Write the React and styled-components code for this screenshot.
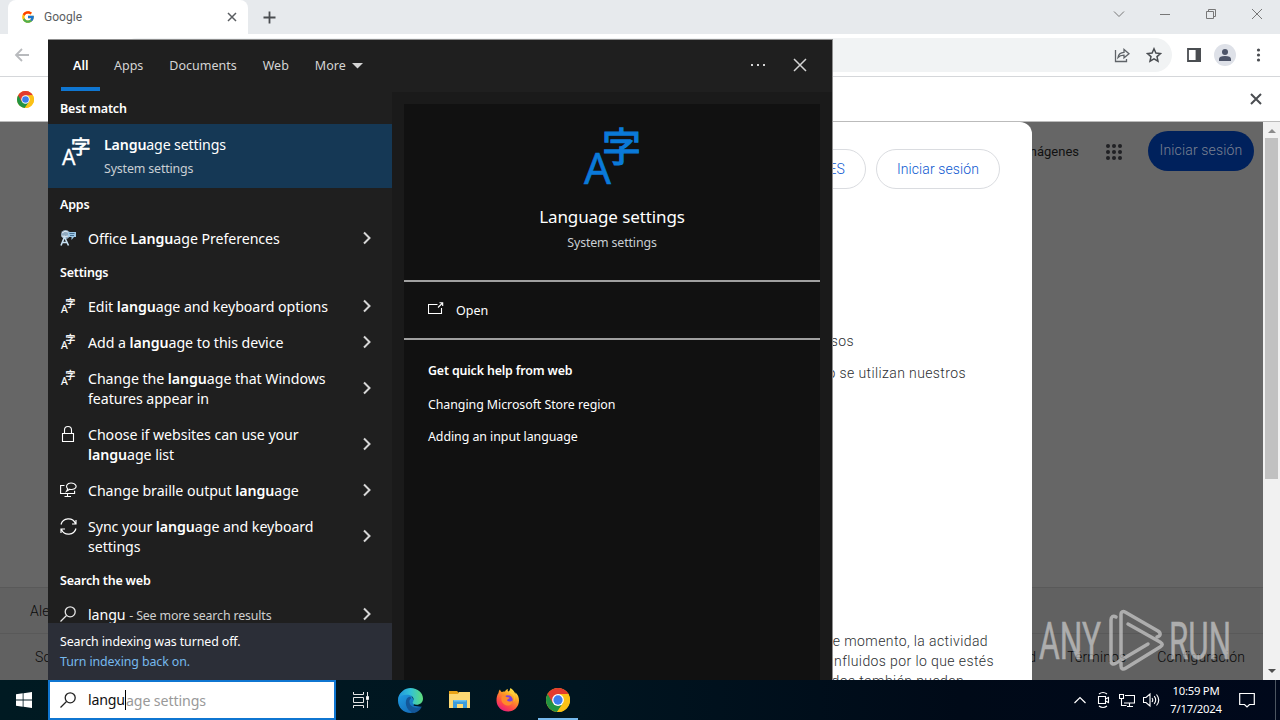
import React from 'react';
import styled, { createGlobalStyle } from 'styled-components';
import { FcGoogle } from 'react-icons/fc';

const GlobalStyle = createGlobalStyle`
  * { box-sizing: border-box; }
  body { margin: 0; overflow: hidden; background: #000; }
  svg { display: block; flex: none; }
`;

const ui = '"Noto Sans", "Open Sans", sans-serif';
const web = 'Roboto, "Liberation Sans", sans-serif';

const Desktop = styled.div`
  position: relative;
  display: flex;
  flex-direction: column;
  width: 1280px;
  height: 720px;
  overflow: hidden;
  font-family: ${ui};
`;

/* ---------- browser ---------- */

const Browser = styled.div`
  display: flex;
  flex-direction: column;
  height: 680px;
  background: #fff;
  font-family: ${web};
`;

const TabStrip = styled.div`
  display: flex;
  align-items: center;
  height: 34px;
  padding-left: 8px;
  background: #e7eaed;
`;

const Tab = styled.div`
  display: flex;
  align-items: center;
  width: 240px;
  height: 34px;
  padding: 0 11px 0 13px;
  border-radius: 8px 8px 0 0;
  background: #fff;
  color: #5a5d61;
  font-size: 12px;
  letter-spacing: 0.05px;
`;

const TabTitle = styled.span`
  flex: 1;
  margin-left: 9px;
`;

const NewTab = styled.div`
  flex: 1;
  padding-left: 15px;
`;

const WindowButtons = styled.div`
  display: flex;
  align-items: center;
  gap: 34px;
  height: 28px;
  align-self: flex-start;
  padding-right: 17px;
`;

const Toolbar = styled.div`
  display: flex;
  align-items: center;
  height: 43px;
  padding: 0 14px;
  border-bottom: 1px solid #d5d7da;
`;

const AddressBar = styled.div`
  display: flex;
  align-items: center;
  justify-content: flex-end;
  flex: 1;
  gap: 16px;
  height: 34px;
  margin: 0 14px 0 90px;
  padding-right: 10px;
  border-radius: 17px;
  background: #f1f3f4;
`;

const ToolbarIcons = styled.div`
  display: flex;
  align-items: center;
  gap: 12px;
`;

const Avatar = styled.div`
  display: flex;
  align-items: center;
  justify-content: center;
  width: 22px;
  height: 22px;
  border-radius: 50%;
  background: #dee1e8;
`;

const InfoBar = styled.div`
  display: flex;
  align-items: center;
  justify-content: space-between;
  height: 45px;
  padding: 0 18px 0 17px;
  border-bottom: 1px solid #bbb;
`;

const Viewport = styled.div`
  display: flex;
  flex: 1;
  min-height: 0;
`;

const Page = styled.div`
  position: relative;
  display: flex;
  flex-direction: column;
  flex: 1;
  min-width: 0;
  background: #666;
  overflow: hidden;
`;

const PageHeader = styled.div`
  display: flex;
  align-items: center;
  justify-content: flex-end;
  height: 58px;
  padding-right: 9px;
  color: #111;
  font-size: 13px;
`;

const SignIn = styled.div`
  width: 106px;
  height: 40px;
  border-radius: 20px;
  background: #00215c;
  color: #7b8292;
  font-size: 14px;
  font-weight: 300;
  line-height: 38px;
  letter-spacing: 0.15px;
  text-align: center;
`;

const AppsGrid = styled.div`
  display: grid;
  grid-template-columns: repeat(3, 4px);
  gap: 2px;
  margin: 2px 26px 0 27px;
`;

const Dot = styled.i`
  height: 4px;
  border-radius: 50%;
  background: #202124;
`;

const PageFooter = styled.div`
  margin-top: auto;
  background: #616161;
  color: #0a0a0a;
  font-size: 14px;
  font-weight: 300;
  letter-spacing: 0.15px;
`;

const FooterRow = styled.div`
  display: flex;
  align-items: center;
  height: ${(props) => props.$height}px;
  padding: 0 18px 0 ${(props) => props.$left}px;
  border-top: 1px solid #595959;
`;

const FooterLinks = styled.div`
  display: flex;
  gap: 31px;
  margin-left: auto;
`;

const Consent = styled.div`
  position: absolute;
  top: 0;
  left: 232px;
  width: 800px;
  height: 570px;
  padding-top: 27px;
  border-radius: 12px 12px 0 0;
  background: #fff;
  color: #2c2e31;
  font-size: 14px;
  font-weight: 300;
  letter-spacing: 0.4px;
`;

const PillRow = styled.div`
  display: flex;
  justify-content: flex-end;
  gap: 10px;
  padding-right: 32px;
`;

const Pill = styled.div`
  width: ${(props) => props.$width}px;
  height: 40px;
  padding-right: 20px;
  border: 1px solid #dadce0;
  border-radius: 20px;
  color: #0b57d0;
  line-height: 38px;
  letter-spacing: 0.1px;
  text-align: right;
`;

const ConsentLine = styled.div`
  height: 20px;
  margin-top: ${(props) => props.$top || 0}px;
  padding-right: ${(props) => props.$right}px;
  line-height: 20px;
  text-align: right;
  white-space: nowrap;
`;

const Scrollbar = styled.div`
  display: flex;
  flex-direction: column;
  align-items: center;
  width: 17px;
  padding: 6px 0;
  background: #f1f1f1;
`;

const Thumb = styled.div`
  width: 13px;
  height: 341px;
  margin: 5px 0 auto;
  background: #c1c1c1;
`;

/* ---------- watermark ---------- */

const Watermark = styled.div`
  position: absolute;
  top: 608px;
  left: 1038px;
  width: 196px;
  height: 66px;
  opacity: 0.65;
`;

/* ---------- search flyout ---------- */

const Flyout = styled.div`
  position: absolute;
  top: 39px;
  left: 48px;
  display: flex;
  flex-direction: column;
  width: 785px;
  height: 641px;
  border: solid #8f8f8f;
  border-width: 1px 1px 0 0;
  background: #1a1a1a;
  color: #fff;
`;

const Scopes = styled.div`
  display: flex;
  height: 52px;
  padding: 0 25px 0 13px;
  background: #1f1f1f;
  font-size: 12.5px;
`;

const Scope = styled.div`
  display: flex;
  align-items: center;
  gap: 6px;
  height: 51px;
  margin-right: ${(props) => props.$gap}px;
  padding: 4px ${(props) => (props.$active ? 12 : 0)}px 0;
  border-bottom: 4px solid ${(props) => (props.$active ? '#0f76d1' : 'transparent')};
  color: ${(props) => (props.$active ? '#fff' : '#d4d4d4')};
  font-weight: ${(props) => (props.$active ? 600 : 400)};
`;

const ScopeActions = styled.div`
  display: flex;
  align-items: center;
  gap: 27px;
  height: 50px;
  margin-left: auto;
`;

const Columns = styled.div`
  display: flex;
  flex: 1;
  min-height: 0;
`;

const Results = styled.div`
  display: flex;
  flex-direction: column;
  width: 344px;
  background: #1f1f1f;
`;

const ResultList = styled.div`
  flex: 1;
  min-height: 0;
  overflow: hidden;
`;

const GroupTitle = styled.div`
  height: 32px;
  padding: 1px 0 0 12px;
  font-size: 12.5px;
  font-weight: 600;
  line-height: 32px;
  letter-spacing: -0.2px;
`;

const BestMatch = styled.div`
  display: flex;
  gap: 14px;
  height: 64px;
  padding: 9px 0 0 14px;
  background: #153855;

  svg { margin-top: 4px; }
`;

const BestTitle = styled.div`
  font-size: 14.2px;
  line-height: 24px;
  letter-spacing: -0.15px;
  b { font-weight: 600; }
`;

const SubText = styled.div`
  color: #c9ced3;
  font-size: 12.4px;
  line-height: 23px;
  letter-spacing: -0.15px;
`;

const Row = styled.div`
  display: flex;
  padding: 8px 19px 8px 12px;
`;

const RowIcon = styled.div`
  display: flex;
  align-items: center;
  justify-content: center;
  width: 16px;
  height: 20px;
  margin-right: 12px;
`;

const RowText = styled.div`
  flex: 1;
  height: ${(props) => props.$lines * 20}px;
  padding-top: 1px;
  font-size: 14.2px;
  line-height: 20px;
  white-space: nowrap;
  letter-spacing: -0.06px;
  b { font-weight: 600; }
  small { color: #d0d0d0; font-size: 12.4px; letter-spacing: -0.15px; }
`;

const RowArrow = styled.div`
  display: flex;
  align-items: center;
`;

const IndexNotice = styled.div`
  height: 57px;
  padding: 9px 12px 0;
  background: #2b2e37;
  font-size: 12.4px;
  line-height: 20px;
  letter-spacing: -0.1px;
`;

const NoticeLink = styled.div`
  color: #76b9ed;
`;

const Preview = styled.div`
  flex: 1;
  margin: 12px 12px 0;
  background: #111;
`;

const Hero = styled.div`
  display: flex;
  flex-direction: column;
  align-items: center;
  height: 178px;
  padding-top: 24px;
  border-bottom: 2px solid #a0a0a0;
`;

const HeroTitle = styled.div`
  margin: 20px 0 1px;
  font-size: 17px;
  line-height: 26px;
  letter-spacing: -0.1px;
`;

const OpenAction = styled.div`
  display: flex;
  align-items: center;
  gap: 12px;
  height: 58px;
  padding: 0 24px;
  border-bottom: 2px solid #a0a0a0;
  font-size: 12.5px;

  svg { margin-top: -2px; }
`;

const WebHelp = styled.div`
  padding: 15px 24px;
  font-size: 12.4px;
  line-height: 32px;
  letter-spacing: -0.06px;
`;

const HelpTitle = styled.div`
  height: 34px;
  font-weight: 600;
  letter-spacing: -0.15px;
`;

/* ---------- taskbar ---------- */

const Taskbar = styled.div`
  display: flex;
  height: 40px;
  background: linear-gradient(90deg, #001a22, #001520 45%, #000a18 75%, #00081b);
  color: #fff;
`;

const StartButton = styled.div`
  display: flex;
  align-items: center;
  justify-content: center;
  width: 48px;
`;

const SearchBox = styled.div`
  display: flex;
  align-items: center;
  width: 288px;
  padding-left: 10px;
  border: 2px solid #0f76d1;
  background: #fff;
  color: #111;
  font-size: 14.2px;
`;

const Typed = styled.span`
  margin-left: 12px;
  border-right: 1px solid #000;
  line-height: 20px;
  letter-spacing: -0.2px;
`;

const Suggestion = styled.span`
  color: #999;
  letter-spacing: -0.1px;
`;

const TaskButton = styled.div`
  display: flex;
  align-items: center;
  justify-content: center;
  width: ${(props) => props.$width || 49}px;
`;

const RunningTask = styled(TaskButton)`
  width: 40px;
  margin-left: 5px;
  padding-top: 2px;
  border-bottom: 2px solid #76b9ed;
`;

const Tray = styled.div`
  display: flex;
  align-items: center;
  gap: 8px;
  margin-left: auto;
`;

const Clock = styled.div`
  width: 56px;
  margin-right: 7px;
  font-size: 11.3px;
  line-height: 18px;
  text-align: center;
  letter-spacing: -0.25px;
  white-space: nowrap;
`;

const ShowDesktop = styled.div`
  width: 5px;
  height: 40px;
  margin-left: 12px;
  border-left: 1px solid #4c5560;
`;

/* ---------- icons ---------- */

const LineIcon = ({ w = 16, h = w, box, color = 'currentColor', sw = 1, children }) => (
  <svg width={w} height={h} viewBox={box || `0 0 ${w} ${h}`} fill="none" stroke={color} strokeWidth={sw}>
    {children}
  </svg>
);

const LanguageIcon = ({ size, color = '#fff', weight = 0.6 }) => (
  <svg width={size} height={size} viewBox="0 0 56 56" overflow="visible" fill={color} stroke={color} strokeWidth={weight}>
    <text x="0" y="56" fontSize="44" fontFamily="Noto Sans" textLength="27" lengthAdjust="spacingAndGlyphs">A</text>
    <text x="18" y="33" fontSize="39" fontFamily="Noto Sans CJK JP" strokeWidth={weight + 0.7}>字</text>
  </svg>
);

const CloseIcon = ({ size, color, sw }) => (
  <LineIcon w={size} color={color} sw={sw}>
    <path d={`M1 1L${size - 1} ${size - 1}M${size - 1} 1L1 ${size - 1}`} />
  </LineIcon>
);

const ChevronRight = () => (
  <LineIcon w={12} h={14} color="#d6d6d6" sw={2}>
    <path d="M3 1.500L8.500 7L3 12.500" />
  </LineIcon>
);

const SearchIcon = ({ color }) => (
  <LineIcon w={16} h={16} color={color} sw={1.3}>
    <circle cx="10.2" cy="5.8" r="5" />
    <path d="M6.5 9.5L0.5 15.5" />
  </LineIcon>
);

const LockIcon = () => (
  <LineIcon w={16} h={18} sw={1.1}>
    <path d="M2.500 8.500h11v8h-11zM4.500 8.500V5a3.500 3.500 0 0 1 7 0v3.500" />
  </LineIcon>
);

const BrailleIcon = () => (
  <LineIcon w={17} h={16} sw={1.1}>
    <path d="M4.500 3.500H0.600v8h14V8.800M7.500 11.500v3M4.500 14.500h6.500" />
    <path d="M6.500 9.200l1.300-2.400C5.300 4.500 7 1 11 1c5 0 6.500 4 3.500 5.700-1.800 1-3.500.8-4.700.5z" />
  </LineIcon>
);

const SyncIcon = () => (
  <LineIcon w={17} h={17} sw={1.2}>
    <path d="M1 6.500A7.700 7.700 0 0 1 15.500 5.500M16 2v4h-4" />
    <path d="M16 10.500A7.700 7.700 0 0 1 1.500 11.500M1 15V11h4" />
  </LineIcon>
);

const OfficeLangIcon = () => (
  <svg width="16" height="16" viewBox="0 0 16 16">
    <circle cx="5.5" cy="4.500" r="4.500" fill="#8fa9bf" />
    <path d="M2 3q3-3 6-1M1.500 6q4 1 7 0" stroke="#e3edf5" fill="none" />
    <path d="M8 2h8v5h-2l-2.500 3V7H8z" fill="#9fc8e6" />
    <path d="M9.500 3.500h5M10 5.500h4" stroke="#456f92" />
    <path d="M1 15.500L4.500 7L8.500 15.500M2.500 12.500h5" stroke="#c7e0f2" strokeWidth="1.600" fill="none" />
  </svg>
);

const ChromeLogo = ({ size }) => (
  <svg width={size} height={size} viewBox="0 0 48 48">
    <circle cx="24" cy="24" r="24" fill="#fbc116" />
    <path d="M24 24L3.200 12A24 24 0 0 0 22 47.900L34.400 30z" fill="#229342" />
    <path d="M24 24L13.600 30L3.200 12A24 24 0 0 1 44.800 12H24z" fill="#e33b2e" />
    <path d="M44.800 12A24 24 0 0 1 22 47.900L34.400 30L36 12z" fill="#fbc116" />
    <circle cx="24" cy="24" r="11.800" fill="#fff" />
    <circle cx="24" cy="24" r="9.300" fill="#3b7ded" />
  </svg>
);

const EdgeLogo = () => (
  <svg width="25" height="25" viewBox="0 0 48 48">
    <defs>
      <linearGradient id="edgeTop" x1="0" x2="1" y1="0.300" y2="0.300">
        <stop offset="0" stopColor="#2196dc" />
        <stop offset="0.500" stopColor="#33c2d6" />
        <stop offset="1" stopColor="#5fdd7a" />
      </linearGradient>
      <linearGradient id="edgeLow" x1="0" y1="0" x2="0.800" y2="1">
        <stop offset="0" stopColor="#1fa1e6" />
        <stop offset="1" stopColor="#1467b4" />
      </linearGradient>
    </defs>
    <path d="M0 24C0 10 11 2 22 8l10 18-2 8 14 2c-5 8-12 12-20 12C11 48 0 38 0 24z" fill="url(#edgeLow)" />
    <path d="M1 20C4 7 13 0 24 0c14 0 24 10 24 20 0 8-6 12-12 12-5 0-8-2-8-4 0-1 2-2 2-6 0-5-6-9-13-9C10 13 4 15 1 20z" fill="url(#edgeTop)" />
    <path d="M19 18c-7 5-6 25 12 30 6-1 11-5 14-11 1-2 0-2-1-1-9 4-22 1-22-10 0-3 1-5 3-6 0-3-2-4-6-2z" fill="#135799" />
  </svg>
);

const FolderIcon = () => (
  <svg width="22" height="20" viewBox="0 0 22 20">
    <path d="M0 1h8l2 2h11v15H0z" fill="#e8a317" />
    <path d="M0 4h9l1-2h11v16H0z" fill="#fcd873" />
    <path d="M4 18v-7q0-1 1-1h12q1 0 1 1v7h-4v-4H8v4z" fill="#3b9bdb" />
    <path d="M5 10h12v1.500H5z" fill="#6cc0ee" />
  </svg>
);

const FirefoxLogo = () => (
  <svg width="24" height="24" viewBox="0 0 48 48">
    <defs>
      <linearGradient id="foxBody" x1="0.800" y1="0" x2="0.200" y2="1">
        <stop offset="0" stopColor="#fff44f" />
        <stop offset="0.350" stopColor="#ffa023" />
        <stop offset="0.700" stopColor="#ff4a45" />
        <stop offset="1" stopColor="#e31587" />
      </linearGradient>
    </defs>
    <path d="M5 10c0-2 1-5 3-7 1 3 2 5 4 5 2-1 4-1 6-1 1-3 4-5 6-5-1 2-1 4 1 5 2-1 3-4 4-7 6 4 8 8 10 12 0-2 0-3-1-4 6 5 8 11 8 17 0 13-10 22-22 22S1 38 1 25c0-6 1-11 4-15z" fill="url(#foxBody)" />
    <circle cx="24" cy="24" r="9.500" fill="#7a3fe0" />
    <path d="M12 16c4-2 7 0 9 2l6 1c0 3-5 3-5 6 3 3 9 3 11-1 1 7-5 12-11 11-8-1-14-9-10-19z" fill="#ff8a2b" />
    <path d="M27 10c9 2 12 9 8 18 6-8 1-19-8-22z" fill="#ffcf3d" />
  </svg>
);

const WatermarkArt = () => (
  <svg width="196" height="66" viewBox="0 0 196 66">
    <g fill="#d6d6d6" stroke="#d6d6d6" strokeWidth="0.500" fontFamily="Roboto" fontSize="52">
      <text x="1" y="51" textLength="62" lengthAdjust="spacingAndGlyphs">ANY</text>
      <text x="131" y="51" textLength="62" lengthAdjust="spacingAndGlyphs">RUN</text>
    </g>
    <g fill="none" stroke="#d6d6d6" strokeWidth="3.500" strokeLinejoin="round" strokeLinecap="round">
      <path d="M78 9c-3-2-5 0-5 3v41c0 3 2 4 5 2l32-19" />
      <path d="M119 29c4-1 4-4 1-6L87 4c-2-1-4 0-4 2v44" />
      <path d="M90 16l32 18c3 2 3 3 0 5L88 60c-3 2-5 1-5-2v-3" />
    </g>
  </svg>
);

const results = [
  { icon: <LanguageIcon size={14} />, text: <>Edit <b>langu</b>age and keyboard options</> },
  { icon: <LanguageIcon size={14} />, text: <>Add a <b>langu</b>age to this device</> },
  { icon: <LanguageIcon size={14} />, lines: 2, text: <>Change the <b>langu</b>age that Windows<br />features appear in</> },
  { icon: <LockIcon />, lines: 2, text: <>Choose if websites can use your<br /><b>langu</b>age list</> },
  { icon: <BrailleIcon />, text: <>Change braille output <b>langu</b>age</> },
  { icon: <SyncIcon />, lines: 2, text: <>Sync your <b>langu</b>age and keyboard<br />settings</> },
];

const ResultRow = ({ icon, lines = 1, children }) => (
  <Row>
    <RowIcon>{icon}</RowIcon>
    <RowText $lines={lines}>{children}</RowText>
    <RowArrow><ChevronRight /></RowArrow>
  </Row>
);

const ChromeWindow = () => (
  <Browser>
    <TabStrip>
      <Tab>
        <FcGoogle size={14} />
        <TabTitle>Google</TabTitle>
        <CloseIcon size={10} color="#5a5d61" sw={1.5} />
      </Tab>
      <NewTab>
        <LineIcon w={13} color="#4a4d51" sw={1.8}><path d="M6.500 0.500v12M0.500 6.500h12" /></LineIcon>
      </NewTab>
      <WindowButtons>
        <LineIcon w={12} color="#777"><path d="M1 3.500l5 5 5-5" /></LineIcon>
        <LineIcon w={12} color="#777"><path d="M1 6.500h10" /></LineIcon>
        <LineIcon w={12} color="#777"><path d="M1.500 3.500h7v7h-7zM3.500 3.500v-2h7v7h-2" /></LineIcon>
        <CloseIcon size={12} color="#777" sw={1} />
      </WindowButtons>
    </TabStrip>
    <Toolbar>
      <LineIcon w={16} color="#b8babd" sw={1.800}><path d="M15 8H2.500M8 2L2 8l6 6" /></LineIcon>
      <AddressBar>
        <LineIcon w={16} color="#5f6368" sw={1.300}>
          <path d="M1.500 3v11.500h11V12M4 10.500C4.500 7 6.500 5.500 10 5.300V2.500l5 4.200-5 4.100V8.200C7.500 8.200 5.500 8.800 4 10.500z" />
        </LineIcon>
        <LineIcon w={16} color="#4a4d51" sw={1.500}>
          <path d="M8 1.800l1.900 4.300 4.600.4-3.500 3.100 1 4.600-4-2.400-4 2.400 1-4.600L1.500 6.500l4.600-.4z" />
        </LineIcon>
      </AddressBar>
      <ToolbarIcons>
        <LineIcon w={16} color="#4a4d51" sw={1.800}>
          <path d="M2 2h12v12H2z" /><path d="M10.500 2h3.500v12h-3.500z" fill="#4a4d51" />
        </LineIcon>
        <Avatar>
          <svg width="14" height="14" viewBox="0 0 14 14" fill="#4d5468">
            <circle cx="7" cy="4" r="3" /><path d="M1 13v-2q0-3 6-3t6 3v2z" />
          </svg>
        </Avatar>
        <svg width="18" height="16" viewBox="0 0 18 16" fill="#4a4d51">
          <circle cx="10.500" cy="3" r="1.600" /><circle cx="10.500" cy="8" r="1.600" /><circle cx="10.500" cy="13" r="1.600" />
        </svg>
      </ToolbarIcons>
    </Toolbar>
    <InfoBar>
      <ChromeLogo size={17} />
      <CloseIcon size={12} color="#4a4d51" sw={2} />
    </InfoBar>
    <Viewport>
      <Page>
        <PageHeader>
          Imágenes
          <AppsGrid>{[...Array(9)].map((_, i) => <Dot key={i} />)}</AppsGrid>
          <SignIn>Iniciar sesión</SignIn>
        </PageHeader>
        <PageFooter>
          <FooterRow $left={30} $height={46}>Alemania</FooterRow>
          <FooterRow $left={35} $height={47}>
            Sobre Google
            <FooterLinks>
              <span>Privacidad</span><span>Términos</span><span>Configuración</span>
            </FooterLinks>
          </FooterRow>
        </PageFooter>
        <Consent>
          <PillRow>
            <Pill $width={70}>ES</Pill>
            <Pill $width={124}>Iniciar sesión</Pill>
          </PillRow>
          <ConsentLine $top={142} $right={178}>sos</ConsentLine>
          <ConsentLine $top={12} $right={66}>cómo se utilizan nuestros</ConsentLine>
          <ConsentLine $top={248} $right={44}>ese momento, la actividad</ConsentLine>
          <ConsentLine $right={38}>influidos por lo que estés</ConsentLine>
          <ConsentLine $right={68}>resultados también pueden</ConsentLine>
        </Consent>
      </Page>
      <Scrollbar>
        <svg width="8" height="5" viewBox="0 0 8 5"><path d="M0 5l4-4 4 4z" fill="#8b8b8b" /></svg>
        <Thumb />
        <svg width="8" height="5" viewBox="0 0 8 5"><path d="M0 0h8L4 4z" fill="#505050" /></svg>
      </Scrollbar>
    </Viewport>
  </Browser>
);

const SearchFlyout = () => (
  <Flyout>
    <Scopes>
      <Scope $active $gap={13.5}>All</Scope>
      <Scope $gap={26}>Apps</Scope>
      <Scope $gap={26}>Documents</Scope>
      <Scope $gap={26}>Web</Scope>
      <Scope $gap={0}>
        More
        <svg width="11" height="6" viewBox="0 0 11 6"><path d="M0 0h11L5.500 5.500z" fill="#d4d4d4" /></svg>
      </Scope>
      <ScopeActions>
        <svg width="16" height="4" viewBox="0 0 16 4" fill="#d4d4d4">
          <path d="M1 1h2v2H1zM7 1h2v2H7zM13 1h2v2h-2z" />
        </svg>
        <CloseIcon size={14} color="#d4d4d4" sw={1.500} />
      </ScopeActions>
    </Scopes>
    <Columns>
      <Results>
        <ResultList>
          <GroupTitle>Best match</GroupTitle>
          <BestMatch>
            <LanguageIcon size={28} />
            <div>
              <BestTitle><b>Langu</b>age settings</BestTitle>
              <SubText>System settings</SubText>
            </div>
          </BestMatch>
          <GroupTitle>Apps</GroupTitle>
          <ResultRow icon={<OfficeLangIcon />}>Office <b>Langu</b>age Preferences</ResultRow>
          <GroupTitle>Settings</GroupTitle>
          {results.map((r, i) => <ResultRow key={i} icon={r.icon} lines={r.lines}>{r.text}</ResultRow>)}
          <GroupTitle>Search the web</GroupTitle>
          <ResultRow icon={<SearchIcon color="#e6e6e6" />}>langu <small>- See more search results</small></ResultRow>
        </ResultList>
        <IndexNotice>
          Search indexing was turned off.
          <NoticeLink>Turn indexing back on.</NoticeLink>
        </IndexNotice>
      </Results>
      <Preview>
        <Hero>
          <LanguageIcon size={56} color="#0a7ad9" />
          <HeroTitle>Language settings</HeroTitle>
          <SubText>System settings</SubText>
        </Hero>
        <OpenAction>
          <LineIcon w={16} h={14} sw={1.100}>
            <path d="M9.500 2.500h-9v9h13V6M10 5.500l4.500-4.500M11.500 0.800h3.200v3.200" />
          </LineIcon>
          Open
        </OpenAction>
        <WebHelp>
          <HelpTitle>Get quick help from web</HelpTitle>
          <div>Changing Microsoft Store region</div>
          <div>Adding an input language</div>
        </WebHelp>
      </Preview>
    </Columns>
  </Flyout>
);

const WindowsTaskbar = () => (
  <Taskbar>
    <StartButton>
      <svg width="16" height="16" viewBox="0 0 16 16" fill="#fff">
        <path d="M0 2.200L6.700 1.300V7.600H0zM7.500 1.200L16 0v7.600H7.500zM0 8.400h6.700v6.300L0 13.800zM7.500 8.400H16V16l-8.500-1.200z" />
      </svg>
    </StartButton>
    <SearchBox>
      <SearchIcon color="#222" />
      <Typed>langu</Typed><Suggestion>age settings</Suggestion>
    </SearchBox>
    <TaskButton $width={48}>
      <LineIcon w={17} h={16} color="#e6e6e6">
        <path d="M1.500 0v2.500h10V0M1.500 16v-2.500h10V16M1.500 5.500h10v5h-10zM15.500 0v4M15.500 8.500V16" />
        <path d="M14.500 4.500h2v3h-2z" fill="#fff" />
      </LineIcon>
    </TaskButton>
    <TaskButton $width={53}><EdgeLogo /></TaskButton>
    <TaskButton $width={46}><FolderIcon /></TaskButton>
    <TaskButton $width={50}><FirefoxLogo /></TaskButton>
    <RunningTask><ChromeLogo size={24} /></RunningTask>
    <Tray>
      <LineIcon w={14} h={8} box="-1 0 14 8" sw={1.200}><path d="M0.500 7L6 1.500 11.500 7" /></LineIcon>
      <LineIcon w={16} h={18} sw={1.100}>
        <path d="M3.500 5.500h7v7h-7zM10.500 8l3-1.500v5l-3-1.500M4 3q4-3 8 0M4 15q4 3 8 0" />
      </LineIcon>
      <LineIcon w={16} h={16} sw={1.100}>
        <path d="M6 3.500h9.500v7.500H5M8 14.500h6M10.500 11v3.500M0.500 2.500h4v4h-4zM2.500 6.500v7h5" />
      </LineIcon>
      <LineIcon w={17} h={16} sw={1.100}>
        <path d="M0.500 5.500H3L7 2v12L3 10.500H0.500zM9 6q1.500 2 0 4M11.200 4.200q3 3.800 0 7.600M13.500 2.500q4.500 5.500 0 11" />
      </LineIcon>
      <Clock>10:59 PM<br />7/17/2024</Clock>
      <LineIcon w={16} h={16} sw={1.200}><path d="M0.700 1.500h14.600v11H10.500L8 15l-2.500-2.500H0.700z" /></LineIcon>
      <ShowDesktop />
    </Tray>
  </Taskbar>
);

export default function App() {
  return (
    <Desktop>
      <GlobalStyle />
      <ChromeWindow />
      <Watermark><WatermarkArt /></Watermark>
      <SearchFlyout />
      <WindowsTaskbar />
    </Desktop>
  );
}
